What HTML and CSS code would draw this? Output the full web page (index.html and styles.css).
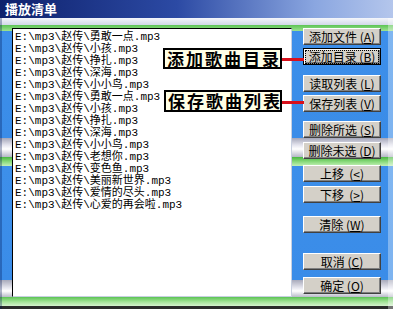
FILE: index.html
```html
<!DOCTYPE html>
<html lang="zh-CN">
<head>
  <meta charset="UTF-8">
  <title>播放清单</title>
  <meta name="viewport" content="width=device-width, initial-scale=1">
  <link rel="stylesheet" href="styles.css">
</head>
<body>
  <div class="win">
    <div class="title">播放清单</div>
    <div class="frame">
      <div class="list">
        <div>E:\mp3\赵传\勇敢一点.mp3</div>
        <div>E:\mp3\赵传\小孩.mp3</div>
        <div>E:\mp3\赵传\挣扎.mp3</div>
        <div>E:\mp3\赵传\深海.mp3</div>
        <div>E:\mp3\赵传\小小鸟.mp3</div>
        <div>E:\mp3\赵传\勇敢一点.mp3</div>
        <div>E:\mp3\赵传\小孩.mp3</div>
        <div>E:\mp3\赵传\挣扎.mp3</div>
        <div>E:\mp3\赵传\深海.mp3</div>
        <div>E:\mp3\赵传\小小鸟.mp3</div>
        <div>E:\mp3\赵传\老想你.mp3</div>
        <div>E:\mp3\赵传\变色鱼.mp3</div>
        <div>E:\mp3\赵传\美丽新世界.mp3</div>
        <div>E:\mp3\赵传\爱情的尽头.mp3</div>
        <div>E:\mp3\赵传\心爱的再会啦.mp3</div>
      </div>
      <div class="panel">
        <div class="grp">
          <button class="btn">添加文件 (<u>A</u>)</button>
          <button class="btn focus"><span>添加目录 (<u>B</u>)</span></button>
        </div>
        <div class="grp g2">
          <button class="btn">读取列表 (<u>L</u>)</button>
          <button class="btn">保存列表 (<u>V</u>)</button>
        </div>
        <div class="grp g3">
          <button class="btn">删除所选 (<u>S</u>)</button>
          <button class="btn">删除未选 (<u>D</u>)</button>
        </div>
        <div class="grp g4">
          <button class="btn">上移&nbsp;&nbsp;(<u>&lt;</u>)</button>
          <button class="btn">下移&nbsp;&nbsp;(<u>&gt;</u>)</button>
        </div>
        <div class="grp g5">
          <button class="btn">清除 (<u>W</u>)</button>
        </div>
        <div class="grp g6">
          <button class="btn">取消 (<u>C</u>)</button>
          <button class="btn">确定 (<u>O</u>)</button>
        </div>
      </div>
    </div>

    <!-- callouts over the list -->
    <div class="tip tip1">添加歌曲目录</div>
    <div class="wire wire1"></div>
    <div class="tip tip2">保存歌曲列表</div>
    <div class="wire wire2"></div>
  </div>
</body>
</html>
```

FILE: styles.css
```css
body { margin: 0; background: #fff; }
.win { position: relative; width: 393px; height: 309px; display: flex; flex-direction: column; overflow: hidden; font-family: "Noto Sans CJK SC", sans-serif; }
.title { height: 18px; line-height: 18px; padding-left: 5px; color: #fff; font-size: 13px; font-weight: bold; background: linear-gradient(90deg, #0e216c, #2c4aa4 45%, #8aa6e0 80%, #b4c6ec); }
.frame {
  flex: 1; display: flex; padding: 10px 0 12px 12px;
  background: linear-gradient(180deg,
    #f4f6fb 0, #d2d8e8 7px,
    #5cc454 7px, #9ee290 13px,
    #3d8fea 13px, #3a8ce8 120px,
    #a4a6b8 120px, #e4e4ee 127px, #ffffff 131px, #b4b6c6 139px,
    #48b840 139px, #8edc80 144px, #c4f0b8 148px,
    #3d8fea 148px, #3a8ce8 262px,
    #a8aabb 262px, #e8e8f0 270px, #ffffff 273px, #b8bac8 279px,
    #5cc454 279px, #a6e49a 284px, #d4f2cc 288px,
    #2a2a2a 288px);
  box-shadow: inset 2px 0 0 rgba(0, 20, 80, 0.3), inset -5px 0 0 rgba(255, 255, 255, 0.35);
}
.list { box-sizing: border-box; width: 280px; height: 269px; padding: 2px 0 0 2px; background: #fff; border-top: 1px solid #000; border-left: 1px solid #000; border-right: 1px solid #c8d0e0; border-bottom: 1px solid #c8d0e0; font-family: "Liberation Mono", "Noto Sans CJK SC", monospace; font-size: 11px; line-height: 12px; color: #000; white-space: nowrap; }
.panel { display: flex; flex-direction: column; padding-left: 11px; }
.grp { display: flex; flex-direction: column; gap: 3px; }
.g2 { margin-top: 10px; }
.g3 { margin-top: 9px; gap: 4px; }
.g4 { margin-top: 6px; gap: 4px; }
.g5 { margin-top: 13px; }
.g6 { margin-top: 20px; gap: 7px; }
.btn { width: 78px; height: 17px; padding: 0; margin: 0; font-family: "Noto Sans CJK SC", sans-serif; font-size: 12px; line-height: 14px; color: #000; background: #d4d0c8; border: 1px solid; border-color: #fff #404040 #404040 #fff; box-shadow: inset -1px -1px 0 #808080; text-align: center; white-space: nowrap; }
.btn u { text-underline-offset: 1px; }
.focus { border-color: #000; box-shadow: inset 1px 1px 0 #fff, inset -2px -2px 0 #808080; }
.focus span { display: block; margin: 1px 2px; outline: 1px dotted #000; line-height: 12px; }
.tip { position: absolute; box-sizing: border-box; background: #ffffe6; border: 2px solid #000; font-size: 17px; font-weight: bold; letter-spacing: 2px; padding-left: 2px; text-align: center; color: #000; line-height: 17px; white-space: nowrap; }
.tip1 { left: 163px; top: 48px; width: 119px; height: 21px; }
.tip2 { left: 164px; top: 90px; width: 118px; height: 22px; line-height: 18px; }
.wire { position: absolute; left: 282px; width: 22px; height: 3px; background: #d8101c; }
.wire1 { top: 58px; }
.wire2 { top: 101px; }
```
